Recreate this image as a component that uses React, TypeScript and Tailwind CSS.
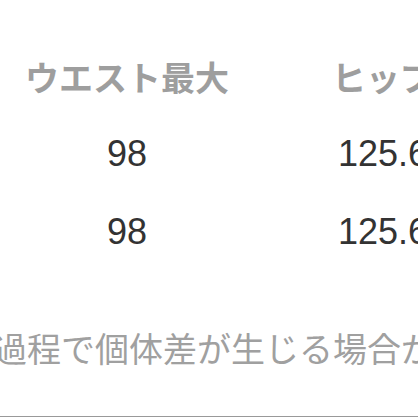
const JP = "font-['Noto_Sans_CJK_JP',sans-serif]"

const ROWS = [
  { waist: '98', hip: '125.6' },
  { waist: '98', hip: '125.6' },
]

export default function App() {
  return (
    <div className={`flex h-[418px] w-[418px] flex-col overflow-hidden bg-white ${JP}`}>
      <div className="ml-[-1px] mt-[37px] grid grid-cols-[256px_256px]">
        <div className="flex h-[78px] items-center justify-center whitespace-nowrap text-[34px] font-semibold text-[#9e9e9e]">
          ウエスト最大
        </div>
        <div className="flex h-[78px] items-center justify-center whitespace-nowrap text-[34px] font-semibold text-[#9e9e9e]">
          ヒップ
        </div>
        {ROWS.map((r, i) => (
          <div key={i} className="contents">
            <div className="flex h-[78px] items-center justify-center font-['Liberation_Sans',sans-serif] text-[36px] text-[#333]">
              {r.waist}
            </div>
            <div className="flex h-[78px] items-center justify-center font-['Liberation_Sans',sans-serif] text-[36px] text-[#333]">
              {r.hip}
            </div>
          </div>
        ))}
      </div>
      <p className="ml-[-7px] mt-[53px] whitespace-nowrap text-[34px] leading-[48px] text-[#a0a0a0]">
        過程で個体差が生じる場合があります。
      </p>
      <div className="mb-px mt-auto h-px bg-[#999]" />
    </div>
  )
}
